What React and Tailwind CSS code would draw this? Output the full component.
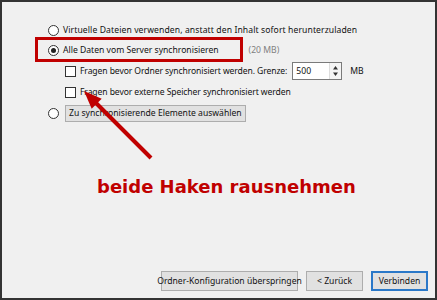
import React from "react";

function Radio({ checked }) {
  return (
    <span className="w-[11px] h-[11px] rounded-full border border-[#333] bg-white flex items-center justify-center shrink-0">
      {checked && <span className="w-[5px] h-[5px] rounded-full bg-[#222]" />}
    </span>
  );
}

function Check() {
  return <span className="w-[11px] h-[11px] border border-[#333] bg-white shrink-0" />;
}

export default function App() {
  return (
    <div
      className="relative w-[437px] h-[300px] border-2 border-[#333] bg-[#f0f0f0] text-[#111] text-[8.6px] whitespace-nowrap flex flex-col overflow-hidden"
      style={{ fontFamily: '"Noto Sans", "Open Sans", sans-serif' }}
    >
      <div className="pl-[46px] pt-[18px] flex flex-col">
        <div className="h-[20px] flex items-center gap-[4px]">
          <Radio />
          <span className="tracking-[0.1px]">Virtuelle Dateien verwenden, anstatt den Inhalt sofort herunterzuladen</span>
        </div>
        <div className="h-[20px] flex items-center gap-[4px]">
          <Radio checked />
          <span>Alle Daten vom Server synchronisieren</span>
          <span className="ml-[26px] text-[#808080]">(20 MB)</span>
        </div>
        <div className="h-[22px] flex items-center pl-[17px] gap-[4px]">
          <Check />
          <span className="tracking-[-0.1px]">Fragen bevor Ordner synchronisiert werden. Grenze:</span>
          <div className="ml-[1px] w-[50px] h-[18px] border border-[#7a7a7a] bg-white flex items-center justify-between pl-[3px]">
            <span>500</span>
            <div className="w-[12px] h-full flex flex-col items-center justify-center border-l border-[#ddd] bg-[#f4f4f4]">
              <svg width="7" height="12" viewBox="0 0 7 12">
                <path d="M3.5 1 L6 4.5 H1 Z" fill="#333" />
                <path d="M3.5 11 L6 7.5 H1 Z" fill="#333" />
              </svg>
            </div>
          </div>
          <span className="ml-[4px]">MB</span>
        </div>
        <div className="h-[20px] flex items-center pl-[17px] gap-[4px]">
          <Check />
          <span className="tracking-[-0.1px]">Fragen bevor externe Speicher synchronisiert werden</span>
        </div>
        <div className="h-[22px] flex items-center gap-[6px]">
          <Radio />
          <span className="h-[17px] px-[3px] flex items-center border border-[#adadad] bg-[#e1e1e1]">
            Zu synchronisierende Elemente auswählen
          </span>
        </div>
      </div>

      <div
        className="mt-[52px] pl-[95px] text-[#c00000] text-[18px] font-bold leading-[22px]"
        style={{ fontFamily: '"DejaVu Sans", Verdana, sans-serif' }}
      >
        beide Haken rausnehmen
      </div>

      <div className="mt-auto mb-[7px] pr-[7px] flex justify-end gap-[8px]">
        <span className="h-[20px] w-[137px] flex items-center justify-center border border-[#adadad] bg-[#e1e1e1]">
          Ordner-Konfiguration überspringen
        </span>
        <span className="h-[20px] w-[57px] flex items-center justify-center border border-[#adadad] bg-[#e1e1e1]">
          &lt; Zurück
        </span>
        <span className="h-[20px] w-[57px] flex items-center justify-center border-2 border-[#2a78c8] bg-[#e1e1e1]">
          Verbinden
        </span>
      </div>

      {/* annotation: red box */}
      <div className="absolute left-[33px] top-[35px] w-[208px] h-[25px] border-[3px] border-[#c00000]" />

      {/* annotation: arrow */}
      <svg className="absolute left-0 top-0" width="437" height="300" viewBox="-2 -2 437 300">
        <line x1="147" y1="154" x2="90" y2="97" stroke="#c00000" strokeWidth="4" />
        <path d="M80 87 L97.7 94.7 L87.7 104.7 Z" fill="#c00000" />
      </svg>
    </div>
  );
}
